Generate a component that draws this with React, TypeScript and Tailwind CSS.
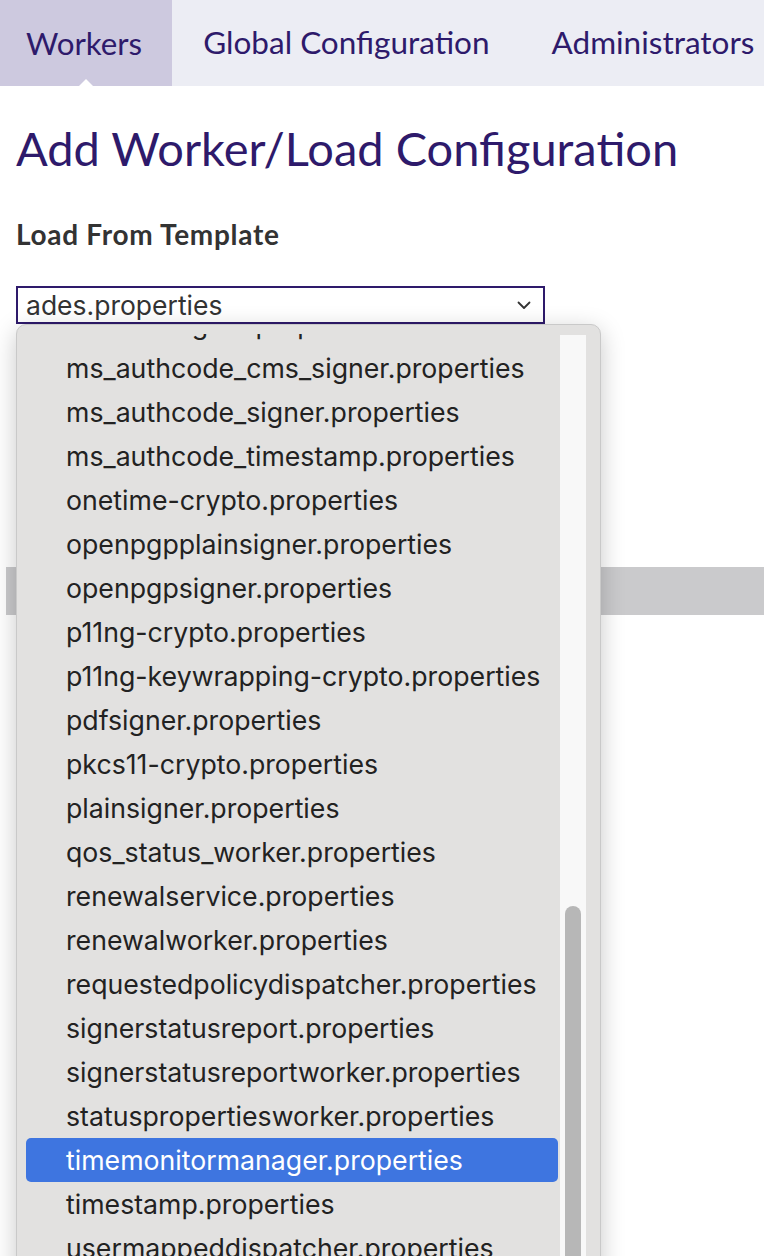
import React from 'react';

const tabs = ['Workers', 'Global Configuration', 'Administrators'];

const templates = [
  'mrtdsodsigner.properties',
  'ms_authcode_cms_signer.properties',
  'ms_authcode_signer.properties',
  'ms_authcode_timestamp.properties',
  'onetime-crypto.properties',
  'openpgpplainsigner.properties',
  'openpgpsigner.properties',
  'p11ng-crypto.properties',
  'p11ng-keywrapping-crypto.properties',
  'pdfsigner.properties',
  'pkcs11-crypto.properties',
  'plainsigner.properties',
  'qos_status_worker.properties',
  'renewalservice.properties',
  'renewalworker.properties',
  'requestedpolicydispatcher.properties',
  'signerstatusreport.properties',
  'signerstatusreportworker.properties',
  'statuspropertiesworker.properties',
  'timemonitormanager.properties',
  'timestamp.properties',
  'usermappeddispatcher.properties',
];

const selected = 'timemonitormanager.properties';

export default function App() {
  return (
    <div className="relative min-h-[1256px] max-h-[1256px] bg-white overflow-hidden font-['Lato',sans-serif]">
      {/* Tabs */}
      <nav className="flex h-[86px] bg-[#ecedf4] whitespace-nowrap">
        {tabs.map((t, i) => (
          <div
            key={t}
            className={
              i === 0
                ? 'relative shrink-0 flex items-center pl-[26px] pr-[30px] bg-[#cdc9df] text-[31.3px] text-[#2e1a6b]'
                : 'relative shrink-0 flex items-center px-[31px] text-[31.5px] text-[#2e1a6b]'
            }
          >
            {t}
            {i === 0 && (
              <span className="absolute bottom-0 left-1/2 -translate-x-1/2 w-0 h-0 border-l-[7px] border-r-[7px] border-b-[7px] border-l-transparent border-r-transparent border-b-white" />
            )}
          </div>
        ))}
      </nav>

      {/* Content */}
      <div className="px-4">
        <h1 className="mt-[34px] text-[47px] leading-[56px] text-[#2e1a6b]">Add Worker/Load Configuration</h1>
        <h3 className="mt-[41px] text-[28px] leading-[34px] tracking-[0.7px] font-bold text-[#333333]">Load From Template</h3>

        <div className="relative mt-[35px] w-[529px]">
          <div className="flex items-center justify-between h-[38px] border-2 border-[#2e1a6b] bg-white pl-[8px] pr-[12px] font-['Inter',sans-serif] text-[26.5px] leading-[28px] text-[#333333]">
            <span>ades.properties</span>
            <svg width="14" height="9" viewBox="0 0 14 9" fill="none">
              <path d="M1.5 1.5 L7 7 L12.5 1.5" stroke="#333" strokeWidth="1.8" strokeLinecap="round" strokeLinejoin="round" />
            </svg>
          </div>

          {/* Open select menu */}
          <div className="absolute left-0 top-full flex w-[585px] h-[960px] rounded-[10px] border border-[#c9c9c9] bg-[#e2e1e0] shadow-[0_6px_24px_rgba(0,0,0,0.22)] overflow-hidden">
            <div className="flex-1 pt-[9px]">
              <div className="h-full overflow-hidden">
                <ul className="-mt-[32px] font-['Inter',sans-serif] text-[26.7px] leading-[30px]">
                  {templates.map((t) => (
                    <li
                      key={t}
                      className={
                        t === selected
                          ? 'ml-[9px] w-[532px] h-[44px] flex items-center pl-[40px] rounded-[5px] bg-[#3e75e0] text-white'
                          : 'ml-[9px] w-[532px] h-[44px] flex items-center pl-[40px] text-[#222222]'
                      }
                    >
                      {t}
                    </li>
                  ))}
                </ul>
              </div>
            </div>
            <div className="mt-[10px] mr-[14px] w-[26px] shrink-0 flex flex-col items-center pt-[571px] bg-[#f8f8f8]">
              <div className="shrink-0 w-[16px] h-[420px] rounded-full bg-[#b7b7b7]" />
            </div>
          </div>
        </div>

        <div className="h-[243px]" />
      </div>

      {/* Table header bar behind the open menu */}
      <div className="ml-[6px] h-[48px] bg-[#cacacc]" />
    </div>
  );
}
